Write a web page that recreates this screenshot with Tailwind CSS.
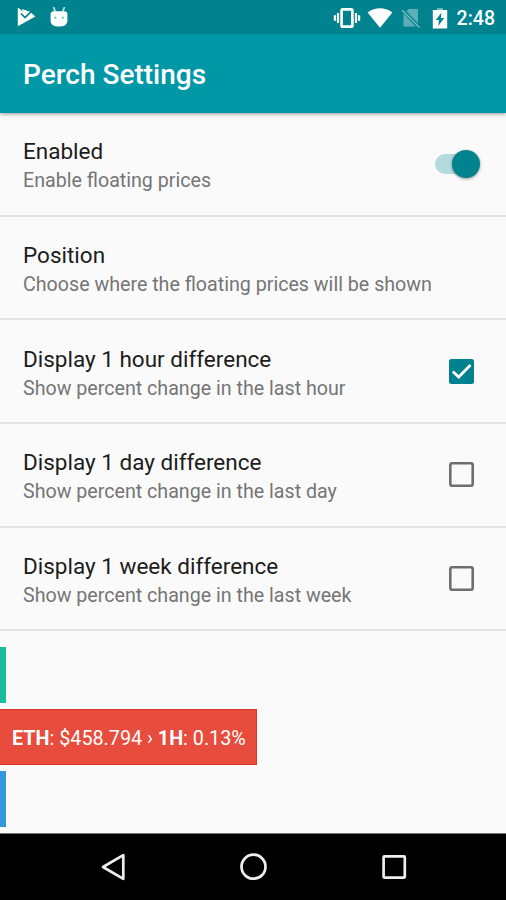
<!DOCTYPE html>
<html lang="en">
<head>
<meta charset="utf-8">
<title>Perch Settings</title>
<script src="https://cdn.jsdelivr.net/npm/@tailwindcss/browser@4"></script>
</head>
<body class="w-[506px] h-[900px] overflow-hidden bg-[#fafafa] font-[Roboto,sans-serif] flex flex-col whitespace-nowrap">
  <header class="shrink-0 shadow-[0_1px_4px_rgba(0,0,0,0.4)]">
    <div class="h-[34px] bg-[#00838f] flex items-center justify-between pl-[17px] pr-[11px] text-white">
      <div class="flex items-center gap-[14px]">
        <svg class="w-[19px] h-[20px]" viewBox="0 0 19 20"><path fill="#fff" d="M.8 .8 L3 2 L7 6 L9 4 L6.5 3 L12.5 4.5 L18.4 9.5 L.8 19.2 Z"/><path fill="#fff" d="M5 2 L12.8 5 L8.3 9 L6 6.8Z"/><path fill="none" stroke="#00838f" stroke-width="1.7" d="M4 6.5 L8 10.5 L14.5 4.3"/></svg>
        <svg class="w-[18px] h-[20px]" viewBox="0 0 18 20"><path stroke="#b9dde1" stroke-width="1.8" fill="none" d="M3.5 0 L5.2 4.5 M14.5 0 L12.8 4.5"/><path fill="#fff" d="M.6 7 Q.6 4.2 4 4.2 H14 Q17.4 4.2 17.4 7 V14 Q17.4 19.5 9 19.5 Q.6 19.5 .6 14Z"/><circle cx="5.3" cy="10.7" r="1.1" fill="#74b8bf"/><circle cx="12.7" cy="10.7" r="1.1" fill="#74b8bf"/></svg>
      </div>
      <div class="flex items-center pt-[2px]">
        <svg class="w-[28px] h-[20px]" viewBox="0 0 28 20"><rect x="8.6" y="1.4" width="10.8" height="17.2" rx="1.2" fill="none" stroke="#fff" stroke-width="2.7"/><path stroke="#fff" stroke-width="2.2" d="M5 5V15M23 5V15M1.9 7.3V12.7M26.1 7.3V12.7"/></svg>
        <svg class="w-[26px] h-[20px] ml-[6px]" viewBox="0 0 26 20"><path fill="#fff" d="M.6 4.4 Q13 -3.8 25.4 4.4 L13 19.8Z"/></svg>
        <svg class="w-[20px] h-[20px] ml-[8px]" viewBox="0 0 20 20"><path fill="#fff" opacity=".36" d="M7.5 1 H17 V15 L5.5 3.5Z M2.5 5.5 L14.5 18.5 H2.5Z"/><path stroke="#fff" opacity=".45" stroke-width="1.5" d="M1 2 L18.5 19.5"/></svg>
        <svg class="w-[16px] h-[21px] ml-[11px]" viewBox="0 0 16 21"><path fill="#fff" opacity=".5" d="M5 .2H11V2H5Z"/><path fill="#fff" d="M.8 2H15.2V20.5H.8Z"/><path fill="#00838f" d="M9.5 4.5 L3.8 12 H7 L6.2 18 L12.2 10 H8.8Z"/></svg>
        <span class="ml-[9px] mt-[2px] text-[19.5px] leading-[24px] font-medium">2:48</span>
      </div>
    </div>
    <div class="h-[79px] bg-[#0097a7] flex items-center pl-[23px] pt-[3px]">
      <h1 class="text-white text-[28px] leading-[34px] font-medium">Perch Settings</h1>
    </div>
  </header>

  <main class="flex-1 flex flex-col">
    <section class="h-[103.7px] border-b-2 border-[#e2e2e2] flex items-center justify-between pl-[23px] pr-[26px]">
      <div class="pt-[5px]"><h2 class="mb-px text-[22.5px] leading-[29px] text-[#1c1c1c]">Enabled</h2><p class="text-[19.65px] leading-[28px] text-[#757575]">Enable floating prices</p></div>
      <div class="relative w-[45px] h-[30px] flex items-center"><div class="w-[40px] h-[20px] rounded-full bg-[#b3dadd]"></div><div class="absolute right-0 top-px w-[28px] h-[28px] rounded-full bg-[#00838f] shadow-[0_1px_3px_rgba(0,0,0,0.4)]"></div></div>
    </section>
    <section class="h-[103.7px] border-b-2 border-[#e2e2e2] flex items-center pl-[23px]">
      <div class="pt-[5px]"><h2 class="mb-px text-[22.5px] leading-[29px] text-[#1c1c1c]">Position</h2><p class="text-[19.65px] leading-[28px] text-[#757575]">Choose where the floating prices will be shown</p></div>
    </section>
    <section class="h-[103.7px] border-b-2 border-[#e2e2e2] flex items-center justify-between pl-[23px] pr-[32px]">
      <div class="pt-[5px]"><h2 class="mb-px text-[22.5px] leading-[29px] text-[#1c1c1c]">Display 1 hour difference</h2><p class="text-[19.65px] leading-[28px] text-[#757575]">Show percent change in the last hour</p></div>
      <svg class="w-[25px] h-[25px]" viewBox="0 0 25 25"><rect width="25" height="25" rx="2.5" fill="#00838f"/><path d="M3.8 12.5 L9.7 18 L21.5 6" fill="none" stroke="#fff" stroke-width="2.7"/></svg>
    </section>
    <section class="h-[103.7px] border-b-2 border-[#e2e2e2] flex items-center justify-between pl-[23px] pr-[32px]">
      <div class="pt-[5px]"><h2 class="mb-px text-[22.5px] leading-[29px] text-[#1c1c1c]">Display 1 day difference</h2><p class="text-[19.65px] leading-[28px] text-[#757575]">Show percent change in the last day</p></div>
      <svg class="w-[25px] h-[25px]" viewBox="0 0 25 25"><rect x="1.3" y="1.3" width="22.4" height="22.4" rx="1.6" fill="none" stroke="#6e6e6e" stroke-width="2.6"/></svg>
    </section>
    <section class="h-[103.7px] border-b-2 border-[#e2e2e2] flex items-center justify-between pl-[23px] pr-[32px]">
      <div class="pt-[5px]"><h2 class="mb-px text-[22.5px] leading-[29px] text-[#1c1c1c]">Display 1 week difference</h2><p class="text-[19.65px] leading-[28px] text-[#757575]">Show percent change in the last week</p></div>
      <svg class="w-[25px] h-[25px]" viewBox="0 0 25 25"><rect x="1.3" y="1.3" width="22.4" height="22.4" rx="1.6" fill="none" stroke="#6e6e6e" stroke-width="2.6"/></svg>
    </section>
    <div class="pt-[16px] flex flex-col items-start gap-[6px]">
      <div class="w-[6px] h-[56px] bg-[#1abc9c]"></div>
      <div class="w-[257px] h-[56px] bg-[#e74c3c] border border-l-0 border-[#d83a29] flex items-center pl-[12px] pt-[2px] text-white text-[19.75px]"><p><b>ETH</b>: $458.794 › <b>1H</b>: 0.13%</p></div>
      <div class="w-[6px] h-[56px] bg-[#3498db]"></div>
    </div>
  </main>

  <nav class="shrink-0 h-[67px] bg-black border-t border-[#777] flex items-center justify-between pl-[100px] pr-[98px]">
    <svg class="w-[28px] h-[28px]" viewBox="0 0 28 28"><path d="M23.3 2.2 V25.8 L3 14Z" fill="none" stroke="#eee" stroke-width="2.7" stroke-linejoin="round"/></svg>
    <svg class="w-[28px] h-[28px]" viewBox="0 0 28 28"><circle cx="13.5" cy="13.7" r="12" fill="none" stroke="#eee" stroke-width="2.7"/></svg>
    <svg class="w-[28px] h-[28px]" viewBox="0 0 28 28"><rect x="3.6" y="3.4" width="21.2" height="21.2" rx=".8" fill="none" stroke="#eee" stroke-width="2.7"/></svg>
  </nav>
</body>
</html>
